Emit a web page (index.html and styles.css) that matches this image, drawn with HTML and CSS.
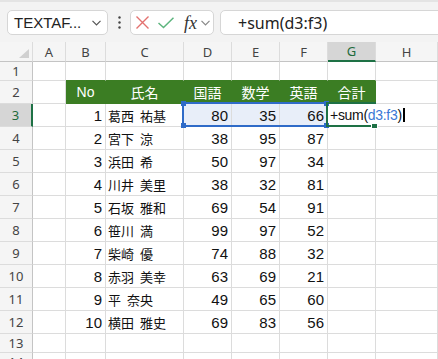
FILE: index.html
```html
<!DOCTYPE html>
<html lang="ja">
<head>
  <meta charset="UTF-8" />
  <title>成績表</title>
  <link rel="stylesheet" href="styles.css">
</head>
<body>

<div class="toolbar">
  <div class="namebox">
    <span>TEXTAF...</span>
    <svg width="9" height="6" viewBox="0 0 9 6"><path d="M0.5 0.8 L4.5 4.8 L8.5 0.8" fill="none" stroke="#555" stroke-width="1.2"/></svg>
  </div>
  <div class="more">
    <svg width="3" height="13" viewBox="0 0 3 13"><circle cx="1.5" cy="1.5" r="1.2" fill="#444"/><circle cx="1.5" cy="6.5" r="1.2" fill="#444"/><circle cx="1.5" cy="11.5" r="1.2" fill="#444"/></svg>
  </div>
  <div class="fxbox">
    <svg class="ic-x" width="13" height="13" viewBox="0 0 13 13"><path d="M0.5 0.5 L12.5 12.5 M12.5 0.5 L0.5 12.5" stroke="#e3716f" stroke-width="1.4" fill="none"/></svg>
    <svg class="ic-ok" width="16" height="12" viewBox="0 0 16 12"><path d="M0.5 6 L5.5 10.5 L15.5 0.7" stroke="#5db57e" stroke-width="1.5" fill="none"/></svg>
    <span class="fx">fx</span>
    <svg class="ic-down" width="9" height="6" viewBox="0 0 9 6"><path d="M0.5 0.8 L4.5 4.8 L8.5 0.8" fill="none" stroke="#888" stroke-width="1.2"/></svg>
  </div>
  <div class="formula">+sum(d3:f3)</div>
</div>

<div class="sheet">
  <div class="row head">
    <div class="corner"><span class="tri"></span></div>
    <div class="ch">A</div><div class="ch">B</div><div class="ch">C</div><div class="ch">D</div>
    <div class="ch">E</div><div class="ch">F</div><div class="ch on">G</div><div class="ch">H</div>
  </div>
  <div class="row short">
    <div class="rh">1</div>
    <div></div><div class="gb"></div><div class="gb"></div><div class="gb"></div>
    <div class="gb"></div><div class="gb"></div><div class="gb"></div><div></div>
  </div>
  <div class="row">
    <div class="rh">2</div>
    <div></div><div class="th">No</div><div class="th">氏名</div><div class="th">国語</div>
    <div class="th">数学</div><div class="th">英語</div><div class="th">合計</div><div></div>
  </div>
  <div class="row">
    <div class="rh on">3</div>
    <div></div><div class="num">1</div><div class="name">葛西 祐基</div><div class="num sel">80</div>
    <div class="num sel">35</div><div class="num sel">66</div><div></div><div></div>
  </div>
  <div class="row">
    <div class="rh">4</div>
    <div></div><div class="num">2</div><div class="name">宮下 涼</div><div class="num">38</div>
    <div class="num">95</div><div class="num">87</div><div></div><div></div>
  </div>
  <div class="row">
    <div class="rh">5</div>
    <div></div><div class="num">3</div><div class="name">浜田 希</div><div class="num">50</div>
    <div class="num">97</div><div class="num">34</div><div></div><div></div>
  </div>
  <div class="row">
    <div class="rh">6</div>
    <div></div><div class="num">4</div><div class="name">川井 美里</div><div class="num">38</div>
    <div class="num">32</div><div class="num">81</div><div></div><div></div>
  </div>
  <div class="row">
    <div class="rh">7</div>
    <div></div><div class="num">5</div><div class="name">石坂 雅和</div><div class="num">69</div>
    <div class="num">54</div><div class="num">91</div><div></div><div></div>
  </div>
  <div class="row">
    <div class="rh">8</div>
    <div></div><div class="num">6</div><div class="name">笹川 満</div><div class="num">99</div>
    <div class="num">97</div><div class="num">52</div><div></div><div></div>
  </div>
  <div class="row">
    <div class="rh">9</div>
    <div></div><div class="num">7</div><div class="name">柴崎 優</div><div class="num">74</div>
    <div class="num">88</div><div class="num">32</div><div></div><div></div>
  </div>
  <div class="row">
    <div class="rh">10</div>
    <div></div><div class="num">8</div><div class="name">赤羽 美幸</div><div class="num">63</div>
    <div class="num">69</div><div class="num">21</div><div></div><div></div>
  </div>
  <div class="row">
    <div class="rh">11</div>
    <div></div><div class="num">9</div><div class="name">平 奈央</div><div class="num">49</div>
    <div class="num">65</div><div class="num">60</div><div></div><div></div>
  </div>
  <div class="row">
    <div class="rh">12</div>
    <div></div><div class="num">10</div><div class="name">横田 雅史</div><div class="num">69</div>
    <div class="num">83</div><div class="num">56</div><div></div><div></div>
  </div>
  <div class="row short">
    <div class="rh">13</div>
    <div></div><div></div><div></div><div></div><div></div><div></div><div></div><div></div>
  </div>
  <div class="row short">
    <div class="rh">14</div>
    <div></div><div></div><div></div><div></div><div></div><div></div><div></div><div></div>
  </div>

  <!-- 数式の参照範囲 D3:F3 -->
  <div class="range">
    <span class="hd tl"></span><span class="hd tr"></span>
    <span class="hd bl"></span><span class="hd br"></span>
  </div>

  <!-- 編集中のセル G3 -->
  <div class="edit">
    <span class="edit-text">+sum(<span class="ref">d3:f3</span>)<span class="caret"></span></span>
    <span class="fill"></span>
  </div>
</div>

</body>
</html>
```

FILE: styles.css
```css
body {
  margin: 0;
  background-color: #fff;
  font-family: "Liberation Sans", "Noto Sans CJK JP", sans-serif;
  color: #111;
  overflow: hidden;
}

/* 数式バー */
.toolbar {
  height: 42px;
  box-sizing: border-box;
  background-color: #f3f3f3;
  border-top: 2px solid #e4e4e4;
  display: flex;
  align-items: flex-start;
  padding: 8px 0 0 7px;
}

.namebox,
.fxbox,
.formula {
  height: 25px;
  box-sizing: border-box;
  background-color: #fff;
  border: 1px solid #d6d6d6;
  border-radius: 5px;
  display: flex;
  align-items: center;
}

.namebox {
  width: 101px;
  justify-content: space-between;
  padding: 0 6px;
  font-size: 15px;
  color: #222;
}

.more {
  width: 22px;
  height: 25px;
  display: flex;
  align-items: center;
  justify-content: center;
}

.fxbox {
  width: 84px;
  padding-left: 5px;
}

.ic-ok {
  margin-left: 9px;
}

.fx {
  margin-left: 10px;
  font-family: "Liberation Serif", serif;
  font-style: italic;
  font-size: 18px;
  color: #333;
  line-height: 1;
}

.ic-down {
  margin-left: 4px;
}

.formula {
  flex: 1;
  margin-left: 6px;
  margin-right: -10px;
  padding-left: 17px;
  font-family: "Noto Sans", sans-serif;
  font-size: 16px;
  color: #222;
}

/* シート */
.sheet {
  position: relative;
}

.row {
  display: grid;
  grid-template-columns: 33px 33px 40px 78px 48px 48px 48px 48px 1fr;
  height: 23px;
}

.row.short {
  height: 19px;
}

.row.head {
  height: 20px;
}

.row > div {
  box-sizing: border-box;
  border-right: 1px solid #dcdcdc;
  border-bottom: 1px solid #dcdcdc;
  display: flex;
  align-items: center;
  white-space: nowrap;
  overflow: hidden;
}

.row > .ch,
.row > .rh,
.row > .corner {
  background-color: #f5f5f5;
  justify-content: center;
  font-family: "Noto Sans", sans-serif;
  font-size: 13px;
  color: #444;
}

.row > .ch,
.row > .corner {
  border-bottom-color: #c4c4c4;
}

.row > .rh {
  border-right-color: #c4c4c4;
}

.row > .ch.on {
  background-color: #d6d6d6;
  color: #1e6b3c;
  border-bottom: 2px solid #1e7145;
}

.row > .rh.on {
  background-color: #d6d6d6;
  color: #1e6b3c;
  border-right: 2px solid #1e7145;
}

.row > .corner {
  align-items: flex-end;
  justify-content: flex-end;
  padding: 0 3px 3px 0;
}

.tri {
  width: 0;
  height: 0;
  border-left: 10px solid transparent;
  border-bottom: 9px solid #d0d0d0;
}

.row > .gb {
  border-bottom-color: #3b7d23;
}

.row > .th {
  background-color: #3b7d23;
  border-color: #3b7d23;
  color: #fff;
  justify-content: center;
  font-size: 14px;
}

.row > .num {
  justify-content: flex-end;
  padding-right: 3px;
  font-size: 15px;
}

.row > .name {
  padding-left: 2px;
  font-family: "Noto Sans CJK JP", sans-serif;
  font-size: 13px;
  word-spacing: 3px;
}

.row > .sel {
  background-color: #e8eef9;
}

/* 参照範囲の枠 */
.range {
  position: absolute;
  left: 182px;
  top: 60px;
  width: 146px;
  height: 25px;
  box-sizing: border-box;
  border: 2px solid #2f6bc8;
}

.hd {
  position: absolute;
  width: 5px;
  height: 5px;
  background-color: #2f6bc8;
}

.hd.tl { left: -3px; top: -3px; }
.hd.tr { right: -3px; top: -3px; }
.hd.bl { left: -3px; bottom: -3px; }
.hd.br { right: -3px; bottom: -3px; }

.edit {
  position: absolute;
  left: 326px;
  top: 60px;
  width: 50px;
  height: 25px;
  box-sizing: border-box;
  border: 2px solid #1e7145;
}

.edit-text {
  position: absolute;
  left: 2px;
  top: 0;
  height: 21px;
  padding-right: 4px;
  background-color: #fff;
  display: flex;
  align-items: center;
  font-family: "Liberation Sans", sans-serif;
  font-size: 14px;
  letter-spacing: -0.3px;
  color: #111;
  white-space: nowrap;
}

.ref {
  color: #3a78d6;
}

.caret {
  width: 2px;
  height: 14px;
  margin-left: 1px;
  background-color: #000;
}

.fill {
  position: absolute;
  right: -4px;
  bottom: -4px;
  width: 5px;
  height: 4px;
  background-color: #1e7145;
  border: 1px solid #fff;
}
```
